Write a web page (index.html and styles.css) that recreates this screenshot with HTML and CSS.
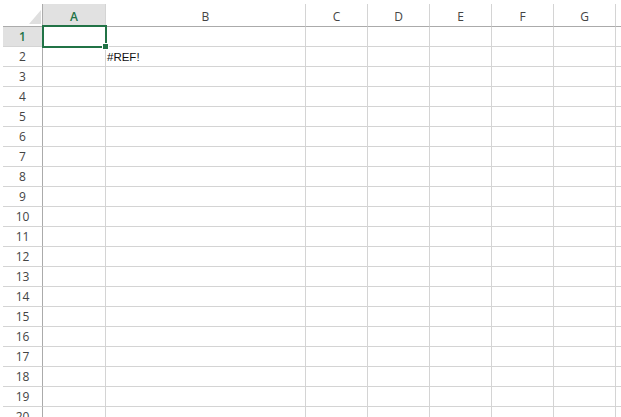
FILE: index.html
```html
<!DOCTYPE html>
<html>
<head>
<meta charset="utf-8">
<title>Sheet1</title>
<link rel="stylesheet" href="styles.css">
</head>
<body>
<div class="sheet">
  <div class="grid">
    <div class="corner"><span class="select-all"></span></div>
    <div class="col-head active">A</div>
    <div class="col-head">B</div>
    <div class="col-head">C</div>
    <div class="col-head">D</div>
    <div class="col-head">E</div>
    <div class="col-head">F</div>
    <div class="col-head">G</div>
    <div class="col-head"></div>

    <div class="row-head active">1</div>
    <div class="cell"></div><div class="cell"></div><div class="cell"></div><div class="cell"></div><div class="cell"></div><div class="cell"></div><div class="cell"></div><div class="cell"></div>

    <div class="row-head">2</div>
    <div class="cell"></div><div class="cell value">#REF!</div><div class="cell"></div><div class="cell"></div><div class="cell"></div><div class="cell"></div><div class="cell"></div><div class="cell"></div>
  </div>
  <div class="grid" id="rows"></div>
  <div class="selection"><span class="fill-handle"></span></div>
</div>
<script src="rows.js"></script>
</body>
</html>
```

FILE: rows.js
```js
// Empty rows 3..20 of the worksheet
(function () {
  var body = document.getElementById('rows');
  var html = '';
  for (var r = 3; r <= 20; r++) {
    html += '<div class="row-head">' + r + '</div>';
    for (var c = 0; c < 8; c++) html += '<div class="cell"></div>';
  }
  body.innerHTML = html;
})();
```

FILE: styles.css
```css
html, body {
  margin: 0;
  padding: 0;
  background: #fff;
  overflow: hidden;
}

.sheet {
  position: relative;
  padding-top: 4px;
  width: 621px;
  height: 417px;
  box-sizing: border-box;
  font-family: "Open Sans", "Noto Sans", sans-serif;
  font-size: 12px;
  color: #444;
}

.grid {
  display: grid;
  grid-template-columns: 43px 63px 200px repeat(5, 62px) 20px;
  grid-auto-rows: 20px;
}

.grid:first-child {
  grid-template-rows: 23px 20px 20px;
}

/* column headers */
.corner,
.col-head {
  box-sizing: border-box;
  border-bottom: 1px solid #ababab;
  border-right: 1px solid #d4d4d4;
  text-align: center;
  line-height: 26px;
}

.corner {
  position: relative;
  margin-left: 3px;
  border-right-color: #ababab;
}

.select-all {
  position: absolute;
  right: 1px;
  bottom: 2px;
  width: 0;
  height: 0;
  border-style: solid;
  border-width: 0 0 14px 12px;
  border-color: transparent transparent #dfdfdf transparent;
}

.col-head.active {
  background: #e1e1e1;
  color: #217346;
  font-weight: 600;
  border-bottom: 2px solid #217346;
  line-height: 25px;
}

/* row headers */
.row-head {
  box-sizing: border-box;
  margin-left: 3px;
  border-right: 1px solid #ababab;
  border-bottom: 1px solid #d4d4d4;
  text-align: center;
  line-height: 20px;
}

.row-head.active {
  background: #e1e1e1;
  color: #217346;
  font-weight: 600;
}

/* cells */
.cell {
  box-sizing: border-box;
  border-right: 1px solid #d4d4d4;
  border-bottom: 1px solid #d4d4d4;
}

.value {
  font-family: "Liberation Sans", Arial, sans-serif;
  font-size: 11.5px;
  color: #111;
  line-height: 21px;
  padding-left: 1px;
  white-space: nowrap;
}

/* active cell outline over A1 */
.selection {
  position: absolute;
  left: 42px;
  top: 25px;
  width: 65px;
  height: 23px;
  box-sizing: border-box;
  border: 2px solid #217346;
}

.fill-handle {
  position: absolute;
  right: -4px;
  bottom: -4px;
  width: 5px;
  height: 5px;
  background: #217346;
  border: 1px solid #fff;
}
```
